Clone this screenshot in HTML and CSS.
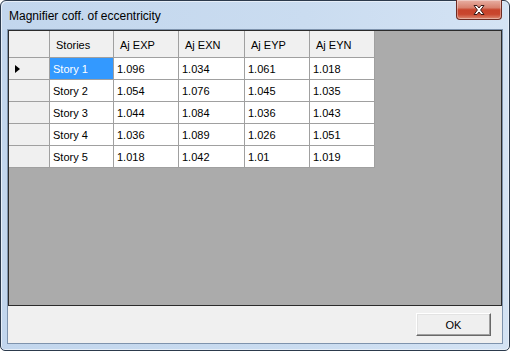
FILE: index.html
```html
<!DOCTYPE html>
<html>
<head>
<meta charset="utf-8">
<link rel="stylesheet" href="styles.css">
</head>
<body>
<div class="window">
  <div class="titlebar">
    <span class="title">Magnifier coff. of eccentricity</span>
    <div class="close">
      <svg width="20" height="12" viewBox="0 0 20 12">
        <path d="M5 1.5 L8 1.5 L10 4 L12 1.5 L15 1.5 L11.6 6 L15 10.5 L12 10.5 L10 8 L8 10.5 L5 10.5 L8.4 6 Z" fill="#ffffff" stroke="#3a1a18" stroke-width="1" stroke-linejoin="round"/>
      </svg>
    </div>
  </div>
  <div class="client">
    <div class="grid">
      <div class="table">
        <div class="row head">
          <div class="cell rh"></div>
          <div class="cell c1">Stories</div>
          <div class="cell c2">Aj EXP</div>
          <div class="cell c3">Aj EXN</div>
          <div class="cell c4">Aj EYP</div>
          <div class="cell c5">Aj EYN</div>
        </div>
        <div class="row">
          <div class="cell rh"><span class="arrow"></span></div>
          <div class="cell c1 sel">Story 1</div>
          <div class="cell c2">1.096</div>
          <div class="cell c3">1.034</div>
          <div class="cell c4">1.061</div>
          <div class="cell c5">1.018</div>
        </div>
        <div class="row">
          <div class="cell rh"></div>
          <div class="cell c1">Story 2</div>
          <div class="cell c2">1.054</div>
          <div class="cell c3">1.076</div>
          <div class="cell c4">1.045</div>
          <div class="cell c5">1.035</div>
        </div>
        <div class="row">
          <div class="cell rh"></div>
          <div class="cell c1">Story 3</div>
          <div class="cell c2">1.044</div>
          <div class="cell c3">1.084</div>
          <div class="cell c4">1.036</div>
          <div class="cell c5">1.043</div>
        </div>
        <div class="row">
          <div class="cell rh"></div>
          <div class="cell c1">Story 4</div>
          <div class="cell c2">1.036</div>
          <div class="cell c3">1.089</div>
          <div class="cell c4">1.026</div>
          <div class="cell c5">1.051</div>
        </div>
        <div class="row">
          <div class="cell rh"></div>
          <div class="cell c1">Story 5</div>
          <div class="cell c2">1.018</div>
          <div class="cell c3">1.042</div>
          <div class="cell c4">1.01</div>
          <div class="cell c5">1.019</div>
        </div>
      </div>
    </div>
    <div class="footer">
      <button class="ok">OK</button>
    </div>
  </div>
</div>
</body>
</html>
```
FILE: styles.css
```css
* { box-sizing: border-box; }
html, body { margin: 0; padding: 0; background: #ffffff; }
.window {
  width: 510px;
  height: 351px;
  border: 1px solid #2c3a4c;
  border-radius: 6px 6px 5px 5px;
  background: linear-gradient(90deg, #c2d6ed 0%, #cadcf0 60%, #d4e3f4 100%);
  box-shadow: inset 1px 1px 0 #e6eef8, inset -1px -1px 0 #e6eef8;
  padding: 0 6px 6px 6px;
  display: flex;
  flex-direction: column;
  position: relative;
}
.titlebar {
  height: 28px;
  display: flex;
  align-items: center;
  padding-left: 2px;
  padding-top: 1px;
}
.title {
  font-family: "Liberation Sans", Arial, sans-serif;
  font-size: 12px;
  color: #000;
}
.close {
  position: absolute;
  top: -1px;
  right: 7px;
  width: 46px;
  height: 20px;
  border: 1px solid #6e2b22;
  border-top: none;
  border-radius: 0 0 4px 4px;
  background: linear-gradient(180deg, #e8b0a4 0%, #d8826f 40%, #c7432b 52%, #c9462e 75%, #dd8a72 100%);
  box-shadow: inset 0 0 0 1px rgba(255,255,255,0.35);
  display: flex;
  align-items: center;
  justify-content: center;
}
.client {
  flex: 1;
  border: 1px solid #7e93ad;
  background: #f0f0f0;
  display: flex;
  flex-direction: column;
}
.grid {
  height: 276px;
  background: #ababab;
  border: 1px solid #2b2b2b;
}
.table {
  display: flex;
  flex-direction: column;
  width: 366px;
  font-family: "Liberation Sans", Arial, sans-serif;
  font-size: 11px;
  color: #000;
}
.row {
  display: flex;
  height: 22px;
}
.row.head { height: 27px; }
.cell {
  border-right: 1px solid #a0a0a0;
  border-bottom: 1px solid #a0a0a0;
  background: #ffffff;
  display: flex;
  align-items: center;
  padding-left: 3px;
  white-space: nowrap;
}
.head .cell { background: #f0f0f0; padding-left: 6px; padding-top: 1px; }
.cell.rh { background: #f0f0f0; width: 41px; padding-left: 6px; }
.c1 { width: 64px; }
.c2 { width: 65px; }
.c3 { width: 66px; }
.c4 { width: 65px; }
.c5 { width: 65px; }
.cell.sel { background: #3399ff; color: #ffffff; }
.arrow {
  width: 0; height: 0;
  border-top: 4px solid transparent;
  border-bottom: 4px solid transparent;
  border-left: 5px solid #000;
}
.footer {
  flex: 1;
  display: flex;
  justify-content: flex-end;
  align-items: flex-start;
  padding: 7px 11px 0 0;
}
.ok {
  width: 75px;
  height: 23px;
  font-family: "Liberation Sans", Arial, sans-serif;
  font-size: 11px;
  color: #000;
  background: #efefef;
  border: 1px solid;
  border-color: #ffffff #696969 #696969 #ffffff;
  box-shadow: inset -1px -1px 0 #a0a0a0, inset 1px 1px 0 #e3e3e3;
  padding: 0;
  margin: 0;
}
```
